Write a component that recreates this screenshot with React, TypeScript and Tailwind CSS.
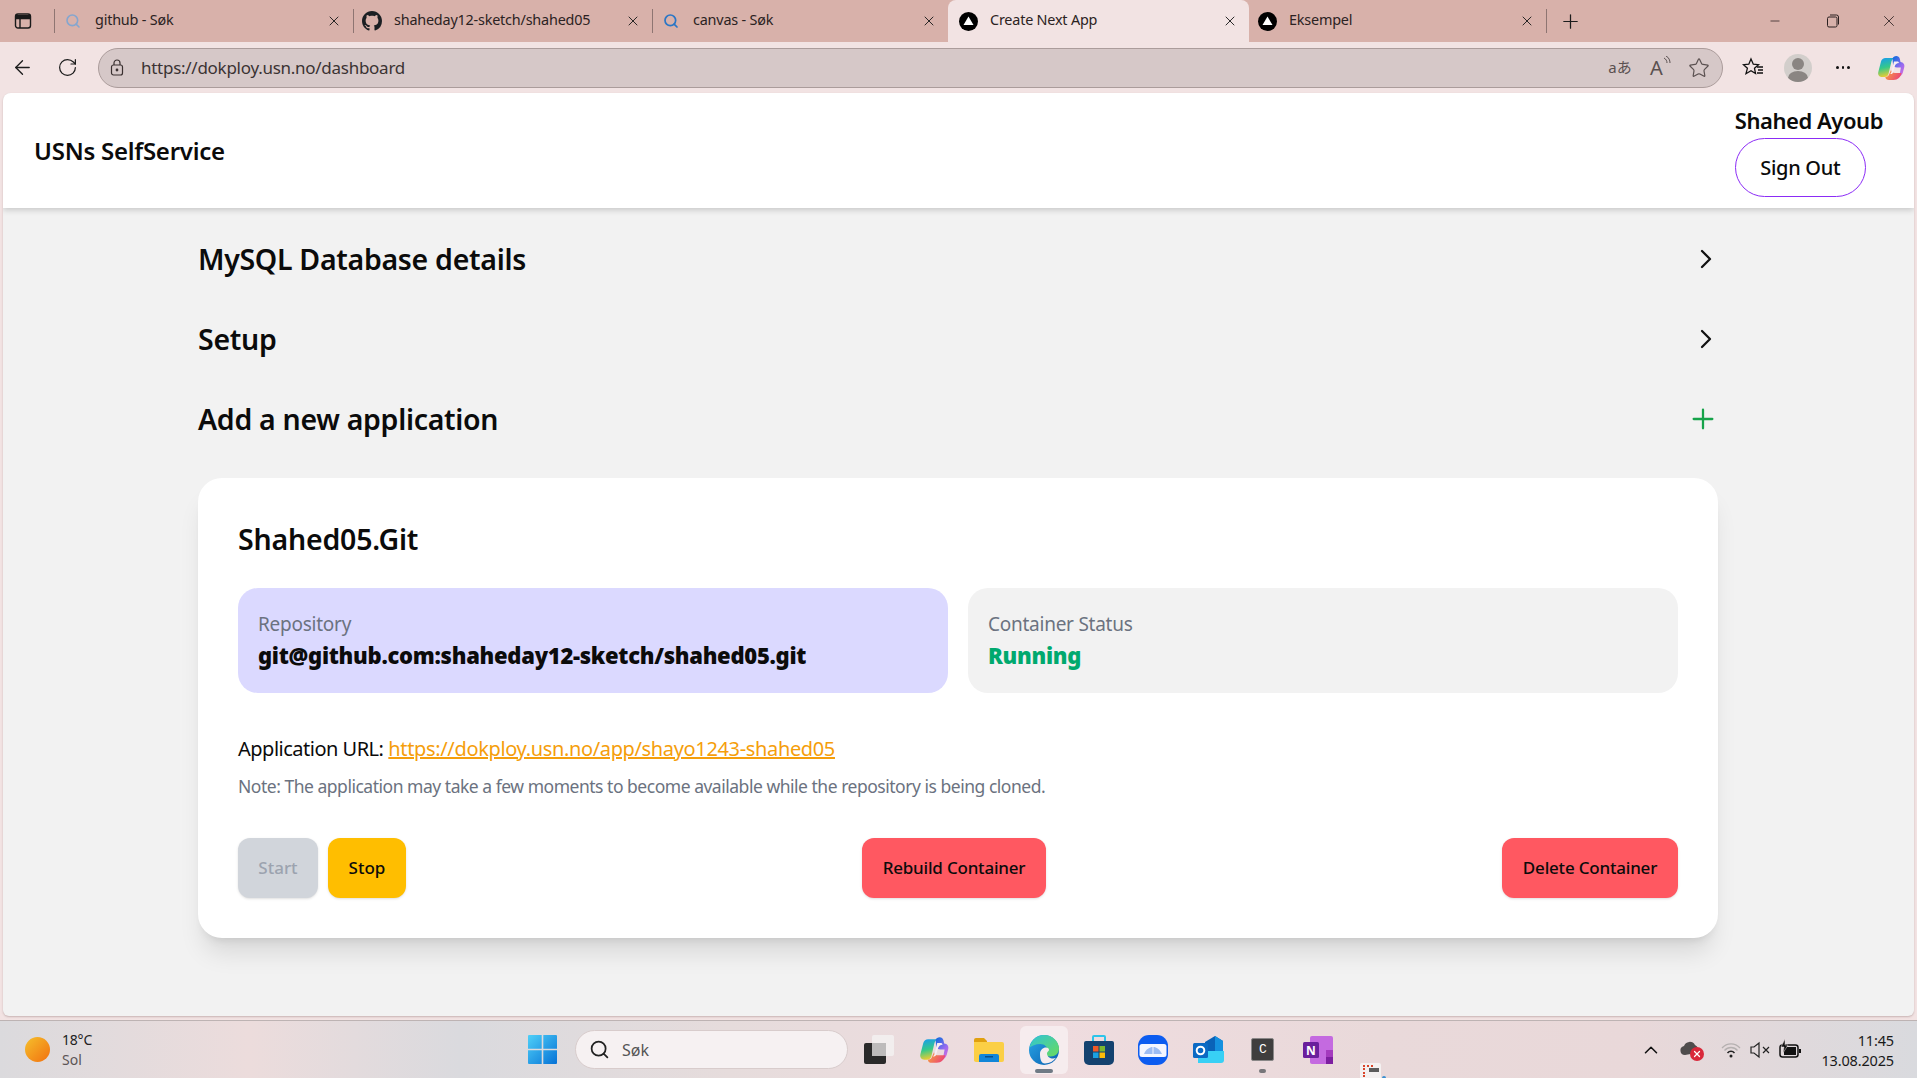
import { ArrowLeft, ChevronRight, ChevronUp, Minus, Plus, RotateCw, Search, Star, X } from 'lucide-react'

const NextLogo = () => (
  <svg width="19" height="19" viewBox="0 0 19 19" className="mr-[4px] shrink-0">
    <circle cx="9.5" cy="9.5" r="9.5" fill="#000" />
    <path d="M9.5 4.5 L14.5 13 H4.5 Z" fill="#fff" />
  </svg>
)

const GithubLogo = () => (
  <svg width="20" height="20" viewBox="0 0 16 16" className="mr-[4px] shrink-0" fill="#1b1f23">
    <path d="M8 0C3.58 0 0 3.58 0 8c0 3.54 2.29 6.53 5.47 7.59.4.07.55-.17.55-.38 0-.19-.01-.82-.01-1.49-2.01.37-2.53-.49-2.69-.94-.09-.23-.48-.94-.82-1.13-.28-.15-.68-.52-.01-.53.63-.01 1.08.58 1.23.82.72 1.21 1.87.87 2.33.66.07-.52.28-.87.51-1.07-1.78-.2-3.64-.89-3.64-3.95 0-.87.31-1.59.82-2.15-.08-.2-.36-1.02.08-2.12 0 0 .67-.21 2.2.82.64-.18 1.32-.27 2-.27s1.36.09 2 .27c1.53-1.04 2.2-.82 2.2-.82.44 1.1.16 1.92.08 2.12.51.56.82 1.27.82 2.15 0 3.07-1.87 3.75-3.65 3.95.29.25.54.73.54 1.48 0 1.07-.01 1.93-.01 2.2 0 .21.15.46.55.38A8.01 8.01 0 0 0 16 8c0-4.42-3.58-8-8-8z" />
  </svg>
)

const Copilot = ({ size = 28, id }: { size?: number; id: string }) => (
  <svg width={size} height={size} viewBox="0 0 28 28" className="shrink-0">
    <defs>
      <linearGradient id={`${id}A`} x1="0.3" y1="0" x2="0.5" y2="1">
        <stop offset="0" stopColor="#1a9fe8" />
        <stop offset="0.5" stopColor="#35c98a" />
        <stop offset="1" stopColor="#f4cc2e" />
      </linearGradient>
      <linearGradient id={`${id}B`} x1="0.3" y1="0" x2="0.9" y2="1">
        <stop offset="0" stopColor="#1f6ce0" />
        <stop offset="0.55" stopColor="#9a6bf0" />
        <stop offset="1" stopColor="#e070d8" />
      </linearGradient>
      <linearGradient id={`${id}C`} x1="0" y1="0" x2="1" y2="0.4">
        <stop offset="0" stopColor="#f8a83a" />
        <stop offset="1" stopColor="#ec4a72" />
      </linearGradient>
    </defs>
    <path d="M8.500 4H17c-1.600 1-2.300 2.500-2.800 4.500L11.500 20c-.5 1.800-2 3-4 3H5c-2.800 0-4.400-2.300-3.700-5L4 7.500C4.600 5.300 6.300 4 8.500 4z" fill={`url(#${id}A)`} />
    <path d="M15.500 4.500C16 3 17.500 2 19.300 2c1.700 0 3 1 3.500 2.800L23.500 8c2.800.2 4.400 2.500 3.800 5l-1.400 5.500C25.200 21 23 23 20.500 23c1.300-1 2-2.300 2.400-4l1-5.500H20c-2.200 0-3.500-1-4-3z" fill={`url(#${id}B)`} />
    <path d="M14 16c.5 2 1.800 3 4 3h6.500c-.8 4-3.500 7-8 7H12c-2 0-3.500-1-3.700-3 2 0 3.400-1 4-3z" fill={`url(#${id}C)`} />
    <path d="M17 7.500h3c1 0 1.700.4 2 1.500-2.200 0-3.700 1.300-4.300 3.500L16 18.500c-.4 1-1 1.500-2 1.500h-1c1-.8 1.300-1.600 1.700-3z" fill="#f8eef2" />
  </svg>
)

const Tab = ({ icon, title, active, width }: { icon: React.ReactNode; title: string; active?: boolean; width: string }) => (
  <div className={`flex h-full items-center ${width} ${active ? 'rounded-t-lg bg-[#f2e3e3]' : ''}`}>
    <div className={`flex shrink-0 justify-center ${active ? 'w-[44px]' : 'w-[40px]'}`}>{icon}</div>
    <span className={`mb-[2px] flex-1 truncate text-[14.4px] tracking-[-0.2px] text-[#2b2222] ${active ? '-ml-[2px]' : ''}`}>{title}</span>
    <X size={16} strokeWidth={1.4} className="mr-[11px] shrink-0 text-[#1c1c1c]" />
  </div>
)

const Sep = () => <div className="h-[24px] w-px shrink-0 bg-[#8e7572]" />

const Accordion = ({ title, plus }: { title: string; plus?: boolean }) => (
  <div className="flex h-[80px] items-center justify-between">
    <h2 className="mb-[2px] text-[28.5px] font-semibold tracking-[-0.3px] text-[#0b0b0b]">{title}</h2>
    {plus ? (
      <Plus size={32} strokeWidth={1.7} className="mb-[3px] -mr-[1px] text-[#16a34a]" />
    ) : (
      <ChevronRight size={32} strokeWidth={1.7} className="mb-[3px] -mr-[4px] text-[#111]" />
    )}
  </div>
)

const TaskIcon = ({ children, active, dot }: { children: React.ReactNode; active?: boolean; dot?: boolean }) => (
  <div className="flex h-[48px] w-[54.8px] items-center justify-center">
    <div className={`relative flex h-[48px] w-[48px] items-center justify-center rounded-md ${active ? 'bg-[#f6ecee]' : ''}`}>
      {children}
      {active && <span className="absolute bottom-[1px] h-[4px] w-[18px] rounded-full bg-[#6f7a85]" />}
      {dot && <span className="absolute bottom-[1px] h-[4px] w-[7px] rounded-full bg-[#77767a]" />}
    </div>
  </div>
)

export default function App() {
  return (
    <div className="flex h-[1078px] w-[1917px] flex-col overflow-hidden bg-[#f2e3e3] font-['Noto_Sans',sans-serif]">
      {/* tab strip */}
      <div className="flex h-[42px] shrink-0 items-center bg-[#d8b1aa]">
        <div className="flex w-[54px] shrink-0 justify-center pr-[8px]">
          <svg width="18" height="18" viewBox="0 0 18 18" fill="none" stroke="#1a1a1a" strokeWidth="1.4">
            <rect x="1.500" y="2" width="15" height="14" rx="2.500" />
            <path d="M1.500 6.500h15M6 6.500V16" />
            <path d="M2 3h14v3H2z" fill="#1a1a1a" stroke="none" />
          </svg>
        </div>
        <Sep />
        <Tab width="w-[298px]" title="github - Søk" icon={<Search size={16} strokeWidth={2.4} className="mr-[4px] text-[#85a6cf]" />} />
        <Sep />
        <Tab width="w-[298px]" title="shaheday12-sketch/shahed05" icon={<GithubLogo />} />
        <Sep />
        <Tab width="w-[295px]" title="canvas - Søk" icon={<Search size={16} strokeWidth={2.6} className="mr-[4px] text-[#2a76c6]" />} />
        <Tab active width="w-[301px]" title="Create Next App" icon={<NextLogo />} />
        <Tab width="w-[297px]" title="Eksempel" icon={<NextLogo />} />
        <Sep />
        <div className="flex w-[46px] shrink-0 justify-center">
          <Plus size={23} strokeWidth={1.3} className="text-[#1c1c1c]" />
        </div>
        <div className="ml-auto flex items-center pr-[1px] text-[#2a2020]">
          <div className="flex w-[58px] justify-center"><Minus size={14} strokeWidth={1.3} /></div>
          <div className="flex w-[58px] justify-center">
            <svg width="14" height="14" viewBox="0 0 14 14" fill="none" stroke="currentColor" strokeWidth="1">
              <rect x="1.500" y="3" width="9.500" height="10" rx="1.500" />
              <path d="M4 1h6.500a2 2 0 0 1 2 2v7.500" />
            </svg>
          </div>
          <div className="flex w-[54px] justify-center"><X size={18} strokeWidth={1.1} /></div>
        </div>
      </div>

      {/* toolbar */}
      <div className="flex h-[51px] shrink-0 items-center">
        <div className="flex w-[45px] shrink-0 justify-center">
          <ArrowLeft size={23} strokeWidth={1.4} className="text-[#1c1c1c]" />
        </div>
        <div className="flex w-[45px] shrink-0 justify-center">
          <RotateCw size={21} strokeWidth={1.4} className="text-[#1c1c1c]" />
        </div>
        <div className="ml-[8px] flex h-[40px] w-[1625px] shrink-0 items-center rounded-full border border-[#ab9c9b] bg-[#d6c8c8] pl-[11px]">
          <svg width="14" height="17" viewBox="0 0 14 17" fill="none" stroke="#3a3030" strokeWidth="1.2" className="shrink-0">
            <rect x="1.500" y="6" width="11" height="10" rx="2" />
            <path d="M4 6V4a3 3 0 0 1 6 0v2" />
            <circle cx="7" cy="11" r="0.800" fill="#3a3030" />
          </svg>
          <span className="ml-[17px] text-[17px] tracking-[-0.27px] text-[#3b3333]">https://dokploy.usn.no/dashboard</span>
          <div className="ml-auto flex items-center pr-[12px] text-[#5a5050]">
            <span className="w-[26px] text-center font-['Noto_Sans','Noto_Sans_CJK_JP',sans-serif] text-[15px] leading-none">aあ</span>
            <span className="ml-[17px] flex w-[24px] items-start text-[20px] leading-none">
              A
              <svg width="8" height="14" viewBox="0 0 8 14" fill="none" stroke="currentColor" strokeWidth="1" className="-mt-[2px]">
                <path d="M1 2c2 1 3 3 3 5M3 0c3 1.500 4 4.500 4 7" />
              </svg>
            </span>
            <Star size={22} strokeWidth={1.3} className="ml-[14px]" />
          </div>
        </div>
        <div className="ml-[18px] flex w-[24px] shrink-0 justify-center">
          <svg width="24" height="24" viewBox="0 0 24 24" fill="none" stroke="#111" strokeWidth="1.300">
            <path d="M10 3l2.300 5.200 5.200.5-4 3.600 1 5.200-4.500-2.800-5 3 1.400-5.400L2.500 8.700 7.800 8.200z" />
            <path d="M16 11h6M17 14h5M16 17h6" />
          </svg>
        </div>
        <div className="ml-[19px] flex h-[28px] w-[28px] shrink-0 items-center justify-center overflow-hidden rounded-full bg-[#d2cecb]">
          <svg width="28" height="28" viewBox="0 0 28 28" fill="#8a8582">
            <circle cx="14" cy="10" r="6" />
            <ellipse cx="14" cy="24" rx="10" ry="7" />
          </svg>
        </div>
        <div className="ml-[19px] flex w-[24px] shrink-0 items-center justify-center gap-[3px]">
          <span className="h-[2.5px] w-[2.5px] rounded-full bg-[#111]" />
          <span className="h-[2.5px] w-[2.5px] rounded-full bg-[#111]" />
          <span className="h-[2.5px] w-[2.5px] rounded-full bg-[#111]" />
        </div>
        <div className="ml-[22px] shrink-0">
          <Copilot id="cpTop" />
        </div>
      </div>

      {/* page */}
      <div className="mx-[3px] flex flex-1 flex-col overflow-hidden rounded-t-lg rounded-b-md bg-[#f2f2f2] shadow-[0_1px_2px_rgba(120,90,90,0.35)]">
        <header className="z-10 flex h-[115px] shrink-0 items-center justify-between bg-white pl-[31px] pr-[31px] shadow-[0_2px_6px_rgba(0,0,0,0.18)]">
          <div className="pt-[1px] text-[24px] font-semibold tracking-[-0.25px] text-[#0b0b0b]">USNs SelfService</div>
          <div className="flex flex-col items-start pt-[1px]">
            <div className="text-[22px] font-semibold leading-[30px] tracking-[-0.45px] text-[#0b0b0b]">Shahed Ayoub</div>
            <button className="mt-[3px] h-[59px] w-[131px] rounded-[30px] border border-[#8b2cf5] bg-white text-[20px] font-medium tracking-[-0.3px] text-[#0b0b0b]">
              Sign Out
            </button>
          </div>
        </header>

        <main className="flex flex-col pl-[195px] pr-[196px] pt-[12px]">
          <Accordion title="MySQL Database details" />
          <Accordion title="Setup" />
          <Accordion title="Add a new application" plus />

          <section className="mt-[18px] rounded-3xl bg-white p-10 shadow-[0_20px_25px_-5px_rgba(0,0,0,0.1),0_8px_10px_-6px_rgba(0,0,0,0.1)]">
            <h3 className="h-[44px] text-[28.5px] font-semibold leading-[42px] tracking-[-0.2px] text-[#0b0b0b]">Shahed05.Git</h3>

            <div className="mt-[26px] grid grid-cols-2 gap-5">
              <div className="flex h-[105px] flex-col rounded-[20px] bg-[#dbd9ff] px-5 pt-[22px]">
                <span className="text-[19px] leading-[28px] tracking-[-0.25px] text-[#6b7280]">Repository</span>
                <span className="pt-[1px] text-[22px] font-black leading-[32px] tracking-[-0.28px] text-[#0b0b0b]">git@github.com:shaheday12-sketch/shahed05.git</span>
              </div>
              <div className="flex h-[105px] flex-col rounded-[20px] bg-[#f2f2f2] px-5 pt-[22px]">
                <span className="text-[19px] leading-[28px] tracking-[-0.25px] text-[#6b7280]">Container Status</span>
                <span className="pt-[1px] text-[22px] font-black leading-[32px] tracking-[-0.28px] text-[#00a96e]">Running</span>
              </div>
            </div>

            <p className="mt-[42px] text-[20px] leading-[28px] tracking-[-0.35px] text-[#0b0b0b]">
              <span className="tracking-[-0.5px]">Application URL:</span>{' '}
              <a className="text-[#f59e0b] underline" href="#">https://dokploy.usn.no/app/shayo1243-shahed05</a>
            </p>
            <p className="mt-[13px] h-[20px] text-[17.5px] leading-[20px] tracking-[-0.48px] text-[#6b7280]">
              Note: The application may take a few moments to become available while the repository is being cloned.
            </p>

            <div className="mt-[42px] flex h-[60px] items-stretch justify-between">
              <div className="flex gap-[10px]">
                <button className="w-[80px] rounded-xl bg-[#d1d5db] text-[17px] font-medium text-[#9ca3af] shadow-sm">Start</button>
                <button className="w-[78px] rounded-xl bg-[#ffbe00] text-[17px] font-medium text-[#0b0b0b] shadow-sm">Stop</button>
              </div>
              <button className="w-[184px] rounded-xl bg-[#ff5861] text-[17px] font-medium tracking-[-0.2px] text-[#0b0b0b] shadow-sm">Rebuild Container</button>
              <button className="w-[176px] rounded-xl bg-[#ff5861] text-[17px] font-medium tracking-[-0.2px] text-[#0b0b0b] shadow-sm">Delete Container</button>
            </div>
          </section>
        </main>
      </div>

      {/* taskbar */}
      <div className="relative mt-[4px] flex h-[58px] shrink-0 items-center border-t border-[#bdb3b3] bg-[linear-gradient(90deg,#dbdadd_0%,#ecdcdc_13%,#dadade_24%,#e6dcdc_38%,#efdcdf_55%,#e9d9da_72%,#e9d8d9_85%,#d9dade_100%)]">
        <div className="flex w-[515px] shrink-0 items-center pl-[25px]">
          <span className="h-[25px] w-[25px] rounded-full bg-[linear-gradient(135deg,#f5c02c,#f2700f)]" />
          <div className="ml-[12px] flex flex-col text-[14px] leading-[20px]">
            <span className="tracking-[-0.2px] text-[#222]">18°C</span>
            <span className="text-[#5c5555]">Sol</span>
          </div>
        </div>
        <div className="flex w-[54px] shrink-0 justify-center">
          <svg width="29" height="29" viewBox="0 0 29 29">
            <defs>
              <linearGradient id="win" x1="0" y1="0" x2="1" y2="1">
                <stop offset="0" stopColor="#4fd0f8" />
                <stop offset="1" stopColor="#0672d6" />
              </linearGradient>
            </defs>
            <path d="M0 1a1 1 0 0 1 1-1h12.700v13.700H0zM15.300 0H28a1 1 0 0 1 1 1v12.700H15.300zM0 15.300h13.700V29H1a1 1 0 0 1-1-1zM15.300 15.300H29V28a1 1 0 0 1-1 1H15.300z" fill="url(#win)" />
          </svg>
        </div>
        <div className="ml-[6px] flex h-[39px] w-[273px] shrink-0 items-center rounded-full border border-[#d8cccc] bg-[#f6f1f2] pl-[13px]">
          <Search size={21} strokeWidth={2} className="text-[#222]" />
          <span className="ml-[12px] text-[16px] text-[#555]">Søk</span>
        </div>
        <div className="ml-[4px] flex items-center">
          <TaskIcon>
            <svg width="30" height="30" viewBox="0 0 30 30">
              <rect x="0" y="8" width="22" height="21" rx="2" fill="#2a2a2a" />
              <rect x="8" y="0" width="22" height="21" rx="2" fill="#f3f1f1" fillOpacity="0.85" />
              <rect x="8" y="8" width="14" height="13" fill="#bdbbbb" />
            </svg>
          </TaskIcon>
          <TaskIcon>
            <Copilot size={30} id="cpBar" />
          </TaskIcon>
          <TaskIcon>
            <svg width="30" height="30" viewBox="0 0 30 30">
              <path d="M0 5a2 2 0 0 1 2-2h8l3 3v20H2a2 2 0 0 1-2-2z" fill="#e0a010" />
              <path d="M0 7h28a2 2 0 0 1 2 2v16a2 2 0 0 1-2 2H2a2 2 0 0 1-2-2z" fill="#fbcf45" />
              <path d="M5 27v-6a2 2 0 0 1 2-2h16a2 2 0 0 1 2 2v6z" fill="#1186d8" />
              <rect x="11" y="21" width="8" height="1.500" fill="#0a4f8a" />
            </svg>
          </TaskIcon>
          <TaskIcon active>
            <svg width="32" height="32" viewBox="0 0 32 32">
              <defs>
                <linearGradient id="edgeA" x1="0" y1="0" x2="1" y2="1">
                  <stop offset="0" stopColor="#2fc4d8" />
                  <stop offset="1" stopColor="#6adb5c" />
                </linearGradient>
                <linearGradient id="edgeB" x1="0" y1="0" x2="1" y2="1">
                  <stop offset="0" stopColor="#2aa8e8" />
                  <stop offset="1" stopColor="#0a5fb0" />
                </linearGradient>
              </defs>
              <circle cx="16" cy="16" r="15" fill="url(#edgeB)" />
              <path d="M1.500 14C3 6 9 1 16 1c8 0 15 6 15 13.500 0 5-4 8-8.500 8-3 0-5-1-5-2.500 0-1 2-1.500 2-4 0-3-3-6-7-6-5 0-9 2-11.500 4z" fill="url(#edgeA)" />
              <path d="M12 20c0-4 3-6.500 6-6.500 2 0 3 1.300 3 2.500s-2 1.500-2 3.500c0 3 3 5 6 5 1 0 2-.2 3-.7-2.500 3.500-6.500 5.700-11 5.700-4 0-5-5-5-9.500z" fill="#f6ecee" />
            </svg>
          </TaskIcon>
          <TaskIcon>
            <svg width="30" height="32" viewBox="0 0 30 32">
              <path d="M9 8V3a1 1 0 0 1 1-1h10a1 1 0 0 1 1 1v5" fill="none" stroke="#2cc4ea" strokeWidth="2" />
              <path d="M0 9a2 2 0 0 1 2-2h26a2 2 0 0 1 2 2v17a5 5 0 0 1-5 5H5a5 5 0 0 1-5-5z" fill="#14426f" />
              <rect x="9" y="12" width="5.500" height="5.500" fill="#f05a28" />
              <rect x="15.500" y="12" width="5.500" height="5.500" fill="#7cb82f" />
              <rect x="9" y="18.500" width="5.500" height="5.500" fill="#1ba1e2" />
              <rect x="15.500" y="18.500" width="5.500" height="5.500" fill="#fbbc09" />
            </svg>
          </TaskIcon>
          <TaskIcon>
            <svg width="30" height="30" viewBox="0 0 30 30">
              <rect x="0" y="0" width="30" height="30" rx="11" fill="#0c5cf0" />
              <rect x="1.500" y="9" width="27" height="13" rx="2.500" fill="#f4f6ff" />
              <path d="M6 19c2-5 6-7 8.500-7v7zM15.500 12c3 0 6 2 8.500 7h-8.500z" fill="#9dbcf3" />
            </svg>
          </TaskIcon>
          <TaskIcon>
            <svg width="31" height="27" viewBox="0 0 31 27">
              <path d="M12 6l10-6 8 5v17a3 3 0 0 1-3 3H12z" fill="#0a62b8" />
              <path d="M5 27V15h26v9a3 3 0 0 1-3 3z" fill="#38d0f5" />
              <path d="M22 0l8 5v10h-8z" fill="#1490df" />
              <rect x="0" y="7" width="15" height="15" rx="1.500" fill="#0b6ac4" />
              <circle cx="7.500" cy="14.500" r="3.800" fill="none" stroke="#fff" strokeWidth="2" />
            </svg>
          </TaskIcon>
          <TaskIcon dot>
            <span className="flex h-[23px] w-[23px] items-center justify-center rounded-[2px] border border-[#8a8888] bg-[#3f3e3e] font-['Liberation_Mono',monospace] text-[13px] text-white">C</span>
          </TaskIcon>
          <TaskIcon>
            <svg width="30" height="28" viewBox="0 0 30 28">
              <path d="M7 2a2 2 0 0 1 2-2h19a2 2 0 0 1 2 2v24a2 2 0 0 1-2 2H9a2 2 0 0 1-2-2z" fill="#c46ae0" />
              <rect x="23" y="14" width="7" height="7" fill="#a43bbe" />
              <rect x="23" y="21" width="7" height="7" fill="#7d1fa0" />
              <rect x="0" y="6" width="16" height="16" rx="1.500" fill="#6a1f9c" />
              <text x="8" y="18.500" textAnchor="middle" fontSize="12" fontWeight="700" fill="#fff" fontFamily="Noto Sans">N</text>
            </svg>
          </TaskIcon>
        </div>

        {/* snipping tool window peeking in */}
        <div className="absolute left-[1360px] top-[42px] h-[16px] w-[21px] rounded-t-[2px] bg-[#f4f1f1]">
          <span className="absolute left-[3px] top-[2px] h-[12px] w-[10px] border-l-[2px] border-t-[2px] border-dotted border-[#d9452b]" />
          <span className="absolute left-[9px] top-[5px] h-[4px] w-[10px] bg-[#5c5c5c]" />
          <span className="absolute -right-[5px] bottom-0 h-[3px] w-[4px] rounded-t-full bg-[#3a8fd0]" />
        </div>

        {/* tray */}
        <div className="ml-auto flex items-center pr-[23px]">
          <ChevronUp size={22} strokeWidth={1.700} className="text-[#111]" />
          <div className="relative ml-[18px] h-[24px] w-[24px]">
            <svg width="20" height="16" viewBox="0 0 20 16" className="absolute left-0 top-[2px]" fill="#4f4c4c">
              <path d="M5 15a4.500 4.500 0 0 1-1-8.900A6 6 0 0 1 15 5a4.500 4.500 0 0 1 1 8z" />
            </svg>
            <span className="absolute bottom-[1px] right-0 flex h-[14px] w-[14px] items-center justify-center rounded-full bg-[#d9283a]">
              <X size={10} strokeWidth={3} className="text-white" />
            </span>
          </div>
          <svg width="20" height="18" viewBox="0 0 20 18" fill="none" className="ml-[17px]">
            <path d="M1 7c5-5.500 13-5.500 18 0M3.500 9.500c3.500-4 9.500-4 13 0" stroke="#b5b0b0" strokeWidth="1.300" />
            <path d="M6.500 12c2-2.300 5-2.300 7 0" stroke="#222" strokeWidth="1.500" />
            <circle cx="10" cy="15" r="1.500" fill="#222" />
          </svg>
          <div className="ml-[9px] flex h-[24px] w-[22px] items-center">
            <svg width="22" height="18" viewBox="0 0 22 18" fill="none" stroke="#222" strokeWidth="1.200">
              <path d="M1 6v6h3l5 4V2L4 6z" />
              <path d="M13 6l6 6M19 6l-6 6" />
            </svg>
          </div>
          <svg width="24" height="22" viewBox="0 0 24 22" className="ml-[7px]">
            <rect x="1" y="6" width="18" height="12" rx="2.500" fill="none" stroke="#111" strokeWidth="1.500" />
            <rect x="20" y="10" width="2" height="4" fill="#111" />
            <rect x="5" y="8" width="12" height="8" fill="#111" />
            <path d="M6 0L2 8h3l-1 6 5-8H6z" fill="#111" stroke="#e6dcdc" strokeWidth="0.500" />
          </svg>
          <div className="ml-[11px] flex w-[80px] flex-col items-end text-[14.5px] leading-[20px] tracking-[-0.15px] text-[#1a1a1a]">
            <span>11:45</span>
            <span>13.08.2025</span>
          </div>
        </div>
      </div>
    </div>
  )
}
